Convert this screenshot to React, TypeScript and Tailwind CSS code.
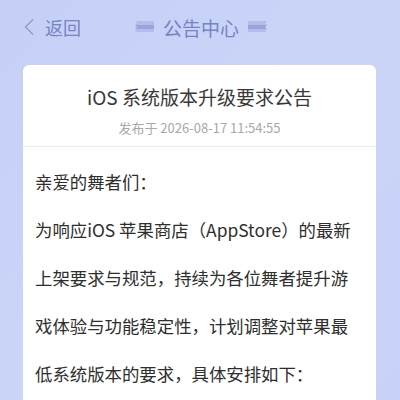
import React from 'react';

const font = { fontFamily: '"Noto Sans CJK SC", "Noto Sans", sans-serif' };

function Ribbon({ flip }: { flip?: boolean }) {
  return (
    <svg width="19" height="12" viewBox="0 0 19 12" className={flip ? '-scale-x-100' : ''}>
      <polygon points="0,0 19,0 19,4 0,4 2,2" fill="#b2bdea" />
      <polygon points="0,4 19,4 19,8 0,8 2,6" fill="#98a5dc" />
      <polygon points="0,8 19,8 19,11 0,11 2,9.5" fill="#b2bdea" />
    </svg>
  );
}

export default function App() {
  const lines = [
    '为响应iOS 苹果商店（AppStore）的最新',
    '上架要求与规范，持续为各位舞者提升游',
    '戏体验与功能稳定性，计划调整对苹果最',
    '低系统版本的要求，具体安排如下：',
  ];

  return (
    <div
      className="w-[400px] h-[400px] overflow-hidden bg-gradient-to-br from-[#c6d0f6] via-[#cbd5f8] to-[#c8d2f7]"
      style={font}
    >
      {/* 顶部导航 */}
      <div className="relative h-[54px] flex items-center">
        <div className="flex items-center pl-[23px] text-[#7784c4]">
          <svg width="12" height="18" viewBox="0 0 12 18" fill="none">
            <path d="M10 1.5 L2.5 9 L10 16.5" stroke="#8d99cf" strokeWidth="1.3" />
          </svg>
          <span className="ml-[10px] text-[18px] leading-none">返回</span>
        </div>
        <div className="absolute left-[135px] top-0 h-[54px] flex items-center gap-[9px] text-[#7784c4]">
          <Ribbon />
          <span className="text-[19px] leading-none">公告中心</span>
          <Ribbon flip />
        </div>
      </div>

      {/* 公告卡片 */}
      <div className="mx-[23px] mt-[11px] w-[353px] bg-white rounded-[6px] h-[400px]">
        <div className="pt-[19px] pb-[9px] text-center">
          <div className="text-[19px] leading-[26px] text-[#383838]">iOS 系统版本升级要求公告</div>
          <div className="mt-[9px] text-[13px] leading-[18px] text-[#a8a8a8]">发布于 2026-08-17 11:54:55</div>
        </div>
        <div className="h-px bg-[#ebebeb]" />
        <div className="px-[12px] pt-[11px] text-[17.4px] leading-[48px] text-[#2e2e2e]">
          <div>亲爱的舞者们：</div>
          {lines.map((l) => (
            <div key={l} className="whitespace-nowrap">{l}</div>
          ))}
        </div>
      </div>
    </div>
  );
}
